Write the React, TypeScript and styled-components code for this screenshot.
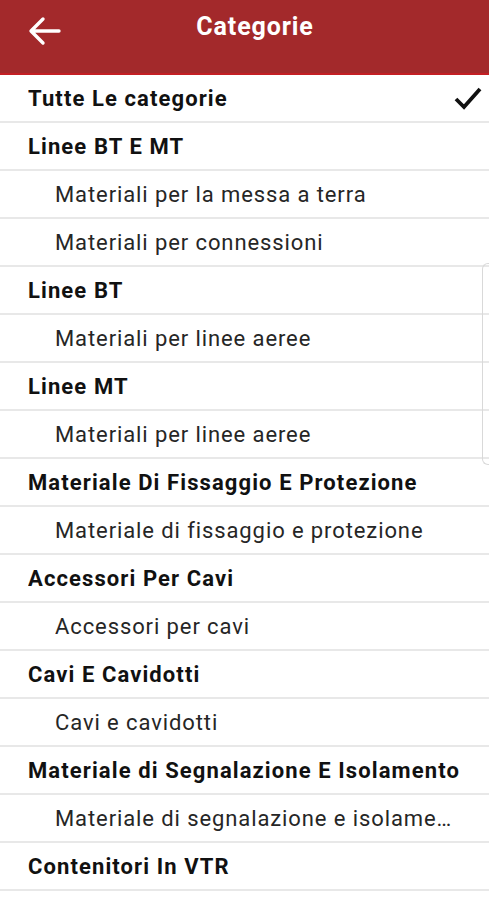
import styled, { createGlobalStyle } from 'styled-components';

const GlobalStyle = createGlobalStyle`
  html, body {
    margin: 0;
    padding: 0;
    background: #ffffff;
    font-family: Roboto, "Noto Sans", Arial, sans-serif;
  }
`;

const Page = styled.div`
  position: relative;
  width: 489px;
  height: 900px;
  overflow: hidden;
  background: #ffffff;
`;

const Header = styled.header`
  height: 73px;
  background: #a3292b;
  border-bottom: 2px solid #c41f24;
  display: flex;
  align-items: flex-start;
  padding: 0 41px 0 28px;
`;

const BackButton = styled.button`
  margin-top: 16px;
  width: 34px;
  height: 30px;
  border: none;
  background: transparent;
  padding: 0;
  display: flex;
  align-items: center;
  justify-content: center;
`;

const Title = styled.h1`
  flex: 1;
  margin: 12px 0 0;
  line-height: 30px;
  text-align: center;
  color: #ffffff;
  font-size: 25px;
  font-weight: 700;
  letter-spacing: 0.9px;
`;

const List = styled.ul`
  list-style: none;
  margin: 0;
  padding: 0;
`;

const Row = styled.li<{ $sub?: boolean }>`
  height: 46px;
  border-bottom: 2px solid #e8e8e8;
  display: flex;
  align-items: center;
  gap: 12px;
  padding: 0 7px 0 ${(p) => (p.$sub ? '55px' : '28px')};
  font-size: 22px;
  font-weight: ${(p) => (p.$sub ? 400 : 700)};
  color: ${(p) => (p.$sub ? '#262626' : '#111111')};
  letter-spacing: ${(p) => (p.$sub ? '0.9px' : '1.1px')};
`;

const Label = styled.span`
  flex: 1;
  margin-right: 22px;
  white-space: nowrap;
  overflow: hidden;
  text-overflow: ellipsis;
`;

const Check = styled.svg`
  flex: none;
  margin-left: -34px;
  width: 28px;
  height: 24px;
`;

const ScrollHint = styled.div`
  position: absolute;
  right: 0;
  top: 263px;
  width: 6px;
  height: 200px;
  border: 1px solid #d9d9d9;
  border-right: none;
  border-radius: 6px 0 0 6px;
`;

const items: { label: string; sub?: boolean }[] = [
  { label: 'Linee BT E MT' },
  { label: 'Materiali per la messa a terra', sub: true },
  { label: 'Materiali per connessioni', sub: true },
  { label: 'Linee BT' },
  { label: 'Materiali per linee aeree', sub: true },
  { label: 'Linee MT' },
  { label: 'Materiali per linee aeree', sub: true },
  { label: 'Materiale Di Fissaggio E Protezione' },
  { label: 'Materiale di fissaggio e protezione', sub: true },
  { label: 'Accessori Per Cavi' },
  { label: 'Accessori per cavi', sub: true },
  { label: 'Cavi E Cavidotti' },
  { label: 'Cavi e cavidotti', sub: true },
  { label: 'Materiale di Segnalazione E Isolamento' },
  { label: 'Materiale di segnalazione e isolamento', sub: true },
  { label: 'Contenitori In VTR' },
];

export default function App() {
  return (
    <Page>
      <GlobalStyle />
      <Header>
        <BackButton aria-label="Indietro">
          <svg width="34" height="30" viewBox="0 0 34 30" fill="none">
            <path
              d="M31 15H4M15 3L3 15l12 12"
              stroke="#ffffff"
              strokeWidth="3.4"
              strokeLinecap="round"
              strokeLinejoin="round"
            />
          </svg>
        </BackButton>
        <Title>Categorie</Title>
      </Header>
      <List>
        <Row>
          <Label>Tutte Le categorie</Label>
          <Check viewBox="0 0 28 24">
            <path d="M2 13l8 8L26 3" stroke="#111111" strokeWidth="3.8" fill="none" />
          </Check>
        </Row>
        {items.map((it, i) => (
          <Row key={i} $sub={it.sub}>
            <Label>{it.label}</Label>
          </Row>
        ))}
      </List>
      <ScrollHint />
    </Page>
  );
}
